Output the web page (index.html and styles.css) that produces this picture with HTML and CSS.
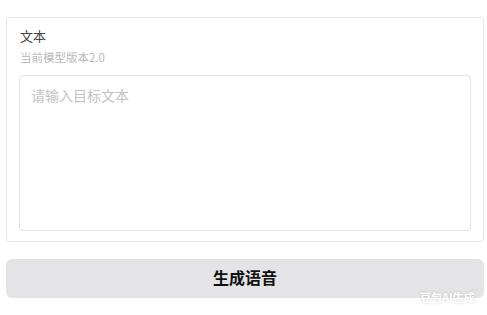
FILE: index.html
```html
<!DOCTYPE html>
<html lang="zh">
<head>
<meta charset="utf-8">
<link rel="stylesheet" href="styles.css">
</head>
<body>
<div class="page">
  <div class="card">
    <div class="title">文本</div>
    <div class="sub">当前模型版本2.0</div>
    <div class="input"><span class="placeholder">请输入目标文本</span></div>
  </div>
  <button class="btn">生成语音</button>
  <div class="mark">豆包AI生成</div>
</div>
</body>
</html>
```
FILE: styles.css
```css
html, body { margin: 0; padding: 0; background: #fff; }
body { width: 487px; height: 315px; overflow: hidden; font-family: "Noto Sans CJK SC", "Noto Sans", sans-serif; }
.page { position: relative; padding: 17px 3px 0 6px; display: flex; flex-direction: column; gap: 17px; height: 315px; box-sizing: border-box; }
.card { border: 1px solid #e6e6e6; border-radius: 4px; padding: 9px 12px 10px 12px; display: flex; flex-direction: column; }
.title { font-size: 13px; color: #444; line-height: 18px; padding-left: 1px; }
.sub { font-size: 11.5px; color: #b8b8b8; line-height: 14px; margin-top: 5px; padding-left: 1px; }
.input { margin-top: 11px; height: 156px; border: 1px solid #e3e3e3; border-radius: 4px; padding: 6px 11px; box-sizing: border-box; }
.placeholder { font-size: 14px; color: #c2c2c2; line-height: 20px; }
.btn { height: 39px; border: none; border-radius: 6px; background: #e4e4e6; font-family: "Noto Sans CJK SC", sans-serif; font-size: 16px; font-weight: bold; color: #111; padding: 0 0 3px 0; }
.mark { position: absolute; left: 420px; top: 289px; font-size: 11px; color: #fff; font-weight: bold; text-shadow: 0 0 3px rgba(0,0,0,0.18); }
```
